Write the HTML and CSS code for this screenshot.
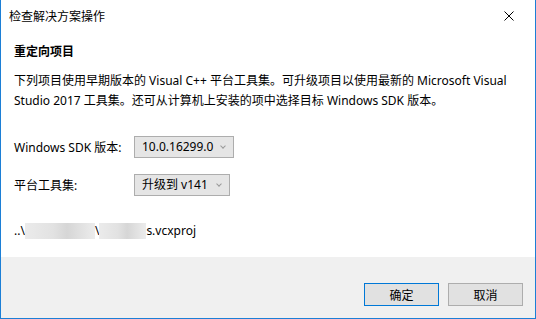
FILE: index.html
```html
<!DOCTYPE html>
<html lang="zh-CN">
<head>
<meta charset="UTF-8">
<title>检查解决方案操作</title>
<link rel="stylesheet" href="styles.css">
</head>
<body>

<div class="window">
    <div class="titlebar">
        <span class="title">检查解决方案操作</span>
        <svg class="close" width="10" height="10" viewBox="0 0 10 10">
            <path d="M0.5 0.5 L9.5 9.5 M9.5 0.5 L0.5 9.5" stroke="#000" stroke-width="1" fill="none"/>
        </svg>
    </div>
    <div class="content">
        <h1>重定向项目</h1>
        <p class="desc">下列项目使用早期版本的 Visual C++ 平台工具集。可升级项目以使用最新的 Microsoft Visual Studio 2017 工具集。还可从计算机上安装的项中选择目标 Windows SDK 版本。</p>
        <div class="field">
            <label>Windows SDK 版本:</label>
            <div class="select sdk">10.0.16299.0<span class="arrow"></span></div>
        </div>
        <div class="field">
            <label>平台工具集:</label>
            <div class="select tools">升级到 v141<span class="arrow"></span></div>
        </div>
        <div class="path">..\<span class="blur b1"></span>\<span class="blur b2"></span>s.vcxproj</div>
    </div>
    <div class="footer">
        <button class="btn default">确定</button>
        <button class="btn">取消</button>
    </div>
</div>

</body>
</html>
```
FILE: styles.css
```css
body {
    margin: 0;
    padding: 0;
    background-color: #fff;
    font-family: "Noto Sans", "Noto Sans CJK SC", sans-serif;
    font-size: 12px;
    color: #000;
}

.window {
    width: 536px;
    height: 319px;
    box-sizing: border-box;
    border: 1px solid #1c7fd6;
    border-top: none;
    display: flex;
    flex-direction: column;
}

.titlebar {
    height: 31px;
    display: flex;
    align-items: center;
    justify-content: space-between;
    padding: 0 21px 0 8px;
}

.title {
    font-size: 12px;
}

.content {
    flex: 1;
    padding: 11px 13px 0;
}

h1 {
    font-size: 12px;
    font-weight: bold;
    margin: 0;
    line-height: 20px;
}

.desc {
    margin: 9px 0 0;
    line-height: 20px;
}

.field {
    display: flex;
    align-items: center;
    margin-top: 25px;
}

.field + .field {
    margin-top: 16px;
}

.field label {
    width: 120px;
}

.select {
    box-sizing: border-box;
    height: 22px;
    padding: 0 0 0 7px;
    border: 1px solid #adadad;
    background-color: #e5e5e5;
    font-size: 12px;
    line-height: 20px;
    white-space: nowrap;
    position: relative;
}

.sdk {
    width: 100px;
}

.tools {
    width: 96px;
}

.arrow {
    position: absolute;
    right: 8px;
    top: 7px;
    width: 3px;
    height: 3px;
    border-right: 1px solid #9a9a9a;
    border-bottom: 1px solid #9a9a9a;
    transform: rotate(45deg);
}

.path {
    margin-top: 26px;
    font-size: 12px;
    display: flex;
    align-items: center;
}

.blur {
    display: inline-block;
    height: 16px;
    background: linear-gradient(90deg, #ebebeb, #e2e2e2 40%, #d6d6d6 60%, #ececec);
}

.b1 {
    width: 70px;
}

.b2 {
    width: 47px;
}

.footer {
    height: 61px;
    background-color: #f0f0f0;
    display: flex;
    justify-content: flex-end;
    align-items: flex-start;
    gap: 9px;
    padding: 26px 12px 0 0;
    box-sizing: border-box;
}

.btn {
    width: 75px;
    height: 23px;
    border: 1px solid #adadad;
    background-color: #e1e1e1;
    font-family: "Noto Sans CJK SC", sans-serif;
    font-size: 12px;
    padding: 0;
}

.btn.default {
    border-color: #0078d7;
}
```
